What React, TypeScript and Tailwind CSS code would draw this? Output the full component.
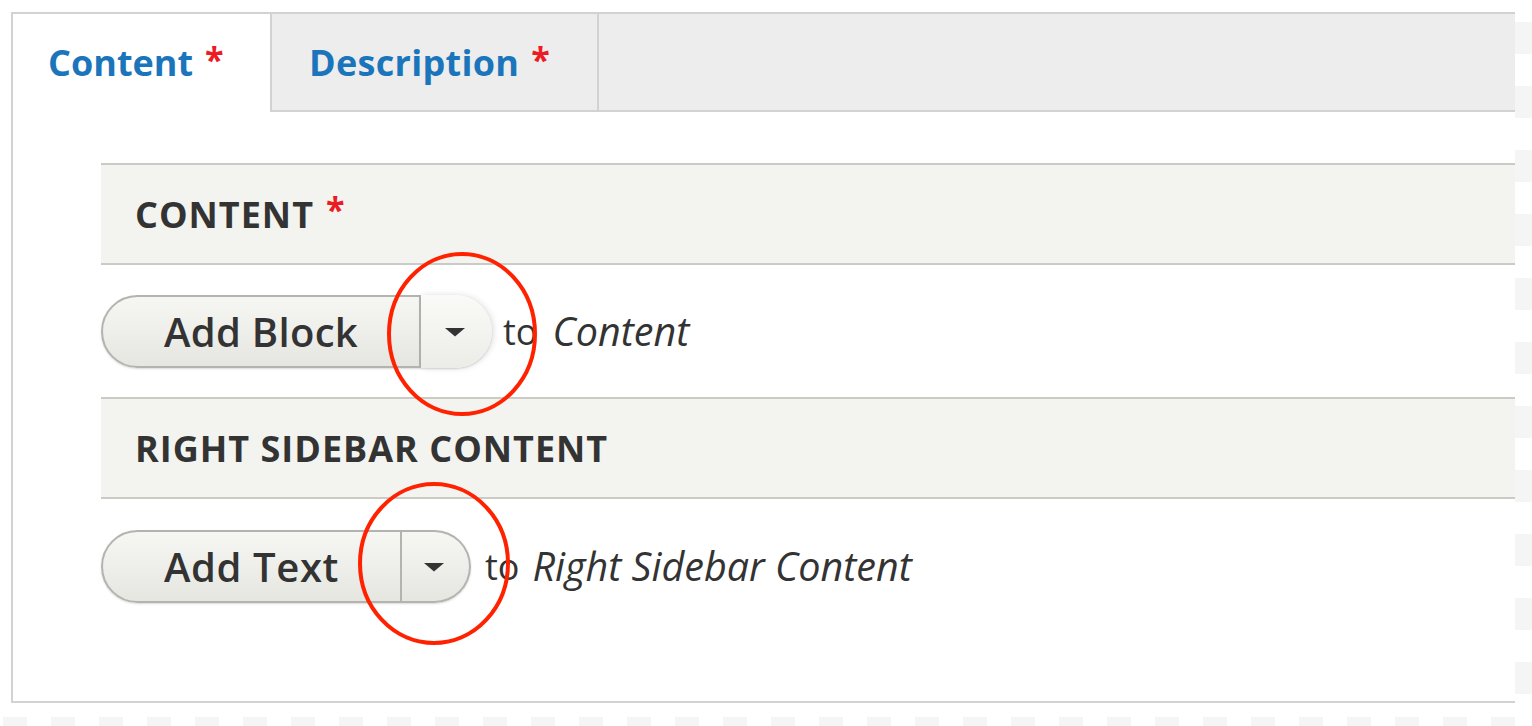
export default function App() {
  const font = "font-['Open_Sans','Liberation_Sans',sans-serif]";

  return (
    <div className={`relative w-[1532px] h-[726px] overflow-hidden bg-white flex ${font}`}>
      {/* left column: panel + bottom strip */}
      <div className="w-[1515px] flex flex-col">
        <div className="mt-3 ml-[11px] h-[691px] border-l-2 border-t-2 border-b-2 border-[#d2d2d2] flex flex-col">
          {/* tabs */}
          <div className="flex h-[98px]">
            <div className="w-[259px] bg-white border-r-2 border-[#d2d2d2] pl-[35px] pt-[21px]">
              <span className="text-[36px] leading-[49px] font-bold text-[#1b75bb]">Content</span>
              <span className="ml-3 text-[34px] leading-[49px] font-bold text-[#ec1c24] align-[4px]">*</span>
            </div>
            <div className="w-[327px] bg-[#ededed] border-r-2 border-b-2 border-[#d2d2d2] pl-[37px] pt-[21px]">
              <span className="text-[36px] leading-[49px] font-bold text-[#1b75bb] tracking-[0.3px]">Description</span>
              <span className="ml-3 text-[34px] leading-[49px] font-bold text-[#ec1c24] align-[4px]">*</span>
            </div>
            <div className="flex-1 bg-[#ededed] border-b-2 border-[#d2d2d2]" />
          </div>

          {/* regions */}
          <div className="pl-[88px] pt-[51px] flex flex-col">
            <div className="h-[102px] bg-[#f3f3ef] border-t-2 border-b-2 border-[#cbcbc6] flex items-center pl-[34px]">
              <span className="text-[36px] leading-[49px] font-bold text-[#333] uppercase tracking-[1px]">Content</span>
              <span className="ml-3 text-[34px] leading-[49px] font-bold text-[#ec1c24] self-start mt-[20px]">*</span>
            </div>

            <div className="mt-[30px] h-[73px] flex items-center">
              <div className="flex h-[73px] shadow-[0_1px_2px_rgba(0,0,0,0.15)] rounded-full">
                <div className="w-[320px] h-full rounded-l-full border-2 border-[#b3b3b0] bg-[linear-gradient(#f6f6f3,#e6e6e1)] flex items-center justify-center text-[40px] font-semibold text-[#333] tracking-[0.3px]">
                  Add Block
                </div>
                <div className="w-[71px] h-full rounded-r-full bg-[linear-gradient(#fafaf8,#ecece7)] shadow-[2px_0_6px_rgba(0,0,0,0.12)] flex items-center justify-center pr-[4px]">
                  <svg width="22" height="10" viewBox="0 0 22 10">
                    <polygon points="1,1 21,1 11,9.5" fill="#333" />
                  </svg>
                </div>
              </div>
              <span className="ml-[11px] text-[36px] text-[#333]">to</span>
              <span className="ml-[15px] text-[39.5px] italic text-[#333]">Content</span>
            </div>

            <div className="mt-[29px] h-[102px] bg-[#f3f3ef] border-t-2 border-b-2 border-[#cbcbc6] flex items-center pl-[34px]">
              <span className="text-[36px] leading-[49px] font-bold text-[#333] uppercase tracking-[1px]">Right Sidebar Content</span>
            </div>

            <div className="mt-[31px] h-[73px] flex items-center">
              <div className="flex h-[73px] shadow-[0_1px_2px_rgba(0,0,0,0.15)] rounded-full">
                <div className="w-[301px] h-full rounded-l-full border-2 border-[#b3b3b0] bg-[linear-gradient(#f6f6f3,#e6e6e1)] flex items-center justify-center text-[40px] font-semibold text-[#333] tracking-[0.6px]">
                  Add Text
                </div>
                <div className="w-[69px] h-full rounded-r-full border-2 border-l-0 border-[#b3b3b0] bg-[linear-gradient(#f6f6f3,#e6e6e1)] flex items-center justify-center pr-[4px]">
                  <svg width="22" height="10" viewBox="0 0 22 10">
                    <polygon points="1,1 21,1 11,9.5" fill="#333" />
                  </svg>
                </div>
              </div>
              <span className="ml-[14px] text-[36px] text-[#333]">to</span>
              <span className="ml-[13px] text-[39.5px] italic text-[#333]">Right Sidebar Content</span>
            </div>
          </div>
        </div>

        {/* bottom transparency strip */}
        <div className="mt-[14px] h-[9px] bg-[linear-gradient(to_right,#f5f5f5_50%,transparent_50%)] bg-[length:48px_9px] bg-[position:3px_0]" />
      </div>

      {/* right transparency strip */}
      <div className="flex-1 bg-[linear-gradient(#f5f5f5_50%,transparent_50%)] bg-[length:100%_64px] bg-[position:0_22px]" />

      {/* red annotation circles */}
      <svg className="absolute inset-0 pointer-events-none" width="1532" height="726">
        <ellipse cx="462" cy="334" rx="73" ry="80" fill="none" stroke="#ff2200" strokeWidth="4" />
        <ellipse cx="434" cy="563.5" rx="74" ry="79.5" fill="none" stroke="#ff2200" strokeWidth="4" />
      </svg>
    </div>
  );
}
